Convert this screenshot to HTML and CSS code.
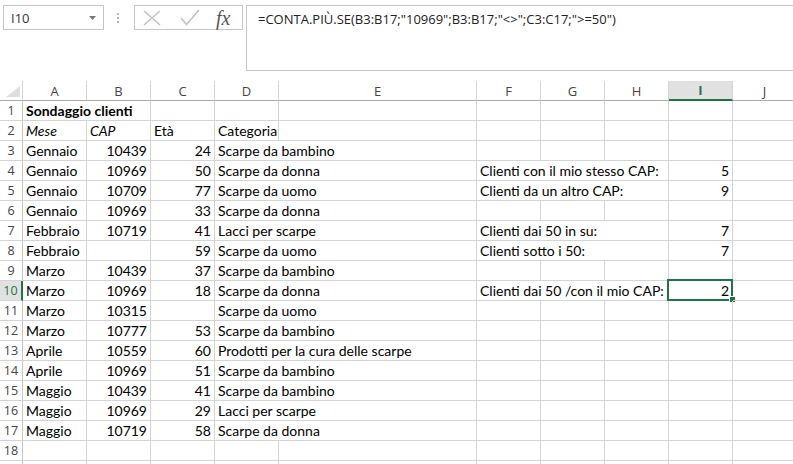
FILE: index.html
```html
<!DOCTYPE html>
<html lang="it">
<head>
  <meta charset="UTF-8">
  <title>Sondaggio clienti</title>
  <link rel="stylesheet" href="styles.css">
</head>
<body>
  <div class="formula-bar">
    <div class="name-box">
      <span>I10</span>
      <svg class="caret" width="7" height="4" viewBox="0 0 7 4"><path d="M0 0h7L3.5 4z"/></svg>
    </div>
    <div class="grip"><i></i><i></i><i></i></div>
    <div class="fx-buttons">
      <svg class="btn-icon" width="18" height="16" viewBox="0 0 18 16"><path d="M1 1l16 14M17 1L1 15"/></svg>
      <svg class="btn-icon" width="20" height="17" viewBox="0 0 20 17"><path d="M1 9l5.5 6.5L19 1"/></svg>
      <span class="fx">fx</span>
    </div>
    <div class="formula-input">=CONTA.PIÙ.SE(B3:B17;"10969";B3:B17;"&lt;&gt;";C3:C17;"&gt;=50")</div>
  </div>

  <div class="sheet">
    <div class="h corner"><svg width="14" height="11" viewBox="0 0 14 11"><path d="M14 0v11H0z"/></svg></div>
    <div class="h col">A</div><div class="h col">B</div><div class="h col">C</div><div class="h col">D</div><div class="h col">E</div>
    <div class="h col">F</div><div class="h col">G</div><div class="h col">H</div><div class="h col sel">I</div><div class="h col">J</div>

    <div class="h row">1</div><div class="c span2 b">Sondaggio clienti</div><div class="c"></div><div class="c"></div><div class="c"></div><div class="c"></div><div class="c"></div><div class="c"></div><div class="c"></div><div class="c"></div>
    <div class="h row">2</div><div class="c i">Mese</div><div class="c i">CAP</div><div class="c">Età</div><div class="c">Categoria</div><div class="c"></div><div class="c"></div><div class="c"></div><div class="c"></div><div class="c"></div><div class="c"></div>
    <div class="h row">3</div><div class="c">Gennaio</div><div class="c n">10439</div><div class="c n">24</div><div class="c span2">Scarpe da bambino</div><div class="c"></div><div class="c"></div><div class="c"></div><div class="c"></div><div class="c"></div>
    <div class="h row">4</div><div class="c">Gennaio</div><div class="c n">10969</div><div class="c n">50</div><div class="c span2">Scarpe da donna</div><div class="c span3">Clienti con il mio stesso CAP:</div><div class="c n">5</div><div class="c"></div>
    <div class="h row">5</div><div class="c">Gennaio</div><div class="c n">10709</div><div class="c n">77</div><div class="c span2">Scarpe da uomo</div><div class="c span3">Clienti da un altro CAP:</div><div class="c n">9</div><div class="c"></div>
    <div class="h row">6</div><div class="c">Gennaio</div><div class="c n">10969</div><div class="c n">33</div><div class="c span2">Scarpe da donna</div><div class="c"></div><div class="c"></div><div class="c"></div><div class="c"></div><div class="c"></div>
    <div class="h row">7</div><div class="c">Febbraio</div><div class="c n">10719</div><div class="c n">41</div><div class="c span2">Lacci per scarpe</div><div class="c span3">Clienti dai 50 in su:</div><div class="c n">7</div><div class="c"></div>
    <div class="h row">8</div><div class="c">Febbraio</div><div class="c n"></div><div class="c n">59</div><div class="c span2">Scarpe da uomo</div><div class="c span3">Clienti sotto i 50:</div><div class="c n">7</div><div class="c"></div>
    <div class="h row">9</div><div class="c">Marzo</div><div class="c n">10439</div><div class="c n">37</div><div class="c span2">Scarpe da bambino</div><div class="c"></div><div class="c"></div><div class="c"></div><div class="c"></div><div class="c"></div>
    <div class="h row sel">10</div><div class="c">Marzo</div><div class="c n">10969</div><div class="c n">18</div><div class="c span2">Scarpe da donna</div><div class="c span3">Clienti dai 50 /con il mio CAP:</div><div class="c n active">2<span class="handle"></span></div><div class="c"></div>
    <div class="h row">11</div><div class="c">Marzo</div><div class="c n">10315</div><div class="c n"></div><div class="c span2">Scarpe da uomo</div><div class="c"></div><div class="c"></div><div class="c"></div><div class="c"></div><div class="c"></div>
    <div class="h row">12</div><div class="c">Marzo</div><div class="c n">10777</div><div class="c n">53</div><div class="c span2">Scarpe da bambino</div><div class="c"></div><div class="c"></div><div class="c"></div><div class="c"></div><div class="c"></div>
    <div class="h row">13</div><div class="c">Aprile</div><div class="c n">10559</div><div class="c n">60</div><div class="c span2">Prodotti per la cura delle scarpe</div><div class="c"></div><div class="c"></div><div class="c"></div><div class="c"></div><div class="c"></div>
    <div class="h row">14</div><div class="c">Aprile</div><div class="c n">10969</div><div class="c n">51</div><div class="c span2">Scarpe da bambino</div><div class="c"></div><div class="c"></div><div class="c"></div><div class="c"></div><div class="c"></div>
    <div class="h row">15</div><div class="c">Maggio</div><div class="c n">10439</div><div class="c n">41</div><div class="c span2">Scarpe da bambino</div><div class="c"></div><div class="c"></div><div class="c"></div><div class="c"></div><div class="c"></div>
    <div class="h row">16</div><div class="c">Maggio</div><div class="c n">10969</div><div class="c n">29</div><div class="c span2">Lacci per scarpe</div><div class="c"></div><div class="c"></div><div class="c"></div><div class="c"></div><div class="c"></div>
    <div class="h row">17</div><div class="c">Maggio</div><div class="c n">10719</div><div class="c n">58</div><div class="c span2">Scarpe da donna</div><div class="c"></div><div class="c"></div><div class="c"></div><div class="c"></div><div class="c"></div>
    <div class="h row">18</div><div class="c"></div><div class="c"></div><div class="c"></div><div class="c"></div><div class="c"></div><div class="c"></div><div class="c"></div><div class="c"></div><div class="c"></div><div class="c"></div>
    <div class="h row"></div><div class="c"></div><div class="c"></div><div class="c"></div><div class="c"></div><div class="c"></div><div class="c"></div><div class="c"></div><div class="c"></div><div class="c"></div><div class="c"></div>
  </div>
</body>
</html>
```

FILE: styles.css
```css
/* Excel-like sheet view */
body {
  margin: 0;
  width: 793px;
  height: 464px;
  overflow: hidden;
  background: #fff;
  font-family: "Open Sans", "Noto Sans", sans-serif;
}

/* Formula bar */
.formula-bar {
  display: flex;
  align-items: flex-start;
  height: 81px;
  padding: 5px 0 0 3px;
  box-sizing: border-box;
}

.name-box {
  display: flex;
  align-items: center;
  justify-content: space-between;
  width: 101px;
  height: 25px;
  padding: 0 7px 0 7px;
  box-sizing: border-box;
  border: 1px solid #c6c6c6;
  font-size: 13px;
  color: #333;
}

.caret {
  fill: #777;
}

.grip {
  display: flex;
  flex-direction: column;
  gap: 2px;
  margin: 8px 15px 0 13px;
}

.grip i {
  width: 2px;
  height: 2px;
  background: #b4b4b4;
}

.fx-buttons {
  display: flex;
  align-items: center;
  gap: 19px;
  width: 109px;
  height: 25px;
  padding-left: 8px;
  box-sizing: border-box;
  border: 1px solid #c6c6c6;
}

.btn-icon {
  fill: none;
  stroke: #c2c2c2;
  stroke-width: 1.6;
}

.fx {
  font-family: "Liberation Serif", serif;
  font-style: italic;
  font-size: 20px;
  color: #555;
  margin-left: -3px;
  line-height: 1;
}

.formula-input {
  flex: 1;
  height: 66px;
  margin: 0 -4px 0 3px;
  padding: 4px 11px;
  box-sizing: border-box;
  border: 1px solid #c6c6c6;
  font-size: 13px;
  color: #222;
  white-space: nowrap;
}

/* Grid */
.sheet {
  display: grid;
  grid-template-columns: 23px repeat(4, 64px) 198px repeat(5, 64px);
  grid-auto-rows: 20px;
}

.h {
  display: flex;
  align-items: center;
  justify-content: center;
  box-sizing: border-box;
  font-size: 13px;
  color: #444;
  background: #fff;
}

.corner {
  justify-content: flex-end;
  align-items: flex-end;
  padding: 0 2px 3px 0;
  border-right: 1px solid #d4d4d4;
  border-bottom: 1px solid #ababab;
}

.corner svg {
  fill: #dfdfdf;
}

.col {
  border-right: 1px solid #d4d4d4;
  border-bottom: 1px solid #ababab;
}

.row {
  border-right: 1px solid #c6c6c6;
  border-bottom: 1px solid #d4d4d4;
  font-size: 12.5px;
}

.col.sel {
  background: #e1e1e1;
  color: #217346;
  font-weight: 700;
  border-bottom: 2px solid #217346;
}

.row.sel {
  background: #e1e1e1;
  color: #217346;
  border-right: 2px solid #217346;
}

.c {
  position: relative;
  padding: 0 3px;
  box-sizing: border-box;
  border-right: 1px solid #d4d4d4;
  border-bottom: 1px solid #d4d4d4;
  font-family: Lato, "Liberation Sans", sans-serif;
  font-size: 14px;
  line-height: 20px;
  color: #000;
  white-space: nowrap;
}

.n {
  text-align: right;
}

.b {
  font-weight: 700;
}

.i {
  font-style: italic;
}

.span2 {
  grid-column: span 2;
}

.span3 {
  grid-column: span 3;
}

.active::before {
  content: '';
  position: absolute;
  top: -2px;
  left: -2px;
  right: -1px;
  bottom: -1px;
  border: 2px solid #217346;
}

.handle {
  position: absolute;
  right: -4px;
  bottom: -3px;
  width: 5px;
  height: 5px;
  background: #217346;
  border: 1px solid #fff;
}
```
